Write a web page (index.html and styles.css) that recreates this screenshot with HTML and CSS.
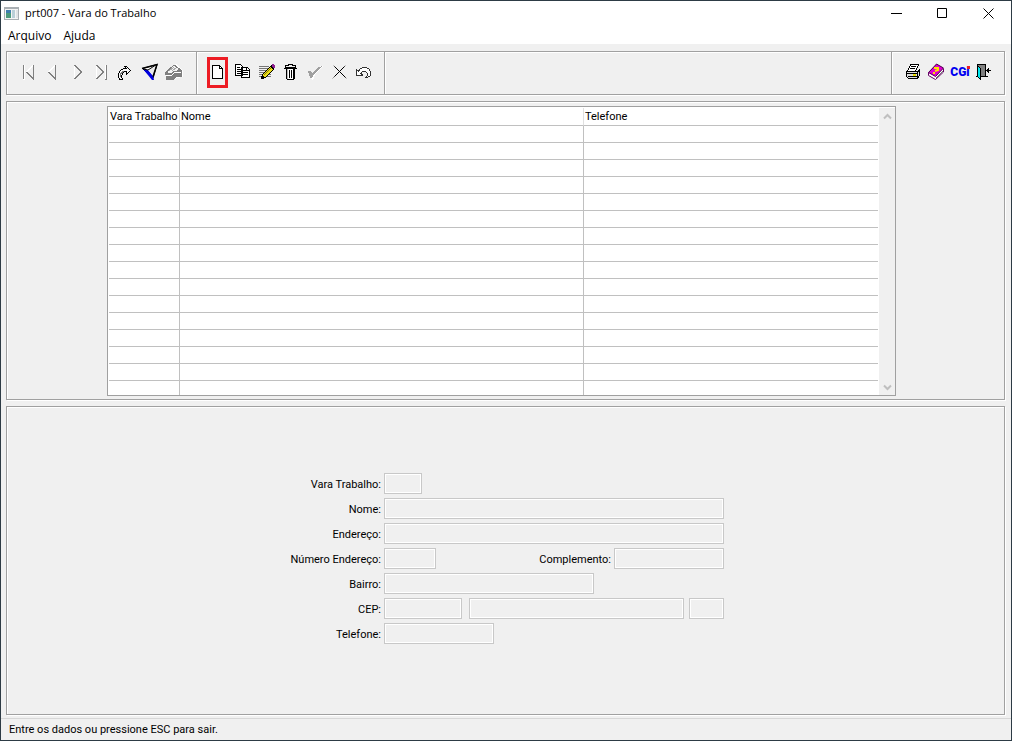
FILE: index.html
```html
<!DOCTYPE html>
<html lang="pt-BR">
<head>
<meta charset="utf-8">
<title>prt007 - Vara do Trabalho</title>
<link rel="stylesheet" href="styles.css">
</head>
<body>
<div class="window">
  <header class="titlebar">
    <svg class="app-icon" width="15" height="13" viewBox="0 0 15 13" shape-rendering="crispEdges" aria-hidden="true">
      <path fill="#a9afb3" d="M0 0h15v13H0z"/><path fill="#f4f4f4" d="M1 2h13v10H1z"/>
      <path fill="#3f7fae" d="M2 3h5v3H2z"/><path fill="#4c9a7c" d="M2 6h5v5H2z"/><path fill="#b9cfd8" d="M8 3h3v8H8z"/><path fill="#dfe3e6" d="M12 3h2v8h-2z"/>
    </svg>
    <h1 class="title">prt007 - Vara do Trabalho</h1>
    <div class="controls">
      <button class="control" type="button" aria-label="Minimizar"><svg width="11" height="11" viewBox="0 0 11 11"><path d="M0 5.500h11"/></svg></button>
      <button class="control" type="button" aria-label="Maximizar"><svg width="11" height="11" viewBox="0 0 11 11"><path d="M.5 .5h9v9h-9z"/></svg></button>
      <button class="control" type="button" aria-label="Fechar"><svg width="11" height="11" viewBox="0 0 11 11"><path d="M.5 .5l10 10M10.500 .5l-10 10"/></svg></button>
    </div>
  </header>
  <nav class="menubar">
    <button class="menu" type="button">Arquivo</button>
    <button class="menu" type="button">Ajuda</button>
  </nav>

  <main class="content">
    <div class="toolbar panel" role="toolbar">
      <div class="group group-nav">
        <button class="tool" type="button" aria-label="Primeiro"><svg viewBox="0 0 24 24"><path class="w" d="M8.500 5v15M6.500 19.500h2M10.500 12l7-7"/><path class="g" d="M7.500 5v14M17.500 5v14.500M10.500 12l7 7"/></svg></button>
        <button class="tool" type="button" aria-label="Anterior"><svg viewBox="0 0 24 24"><path class="w" d="M8.500 12l7-7"/><path class="g" d="M15.500 5v14.500M8.500 12l7 7"/></svg></button>
        <button class="tool" type="button" aria-label="Próximo"><svg viewBox="0 0 24 24"><path class="w" d="M10.500 5v14"/><path class="g" d="M10.500 5l7 7-7 7"/></svg></button>
        <button class="tool" type="button" aria-label="Último"><svg viewBox="0 0 24 24"><path class="w" d="M8.500 5v14M17.500 5v14"/><path class="g" d="M8.500 5l7 7-7 7M18.500 5v14.500h-2"/></svg></button>
        <button class="tool" type="button" aria-label="Ir para"><svg viewBox="0 0 24 24"><path fill="#f8f8f8" stroke="#000" d="M8.500 19.500h-1l-1-3v-3l2-3 3-2h3l-2-2h2l4 4-4 4v-3h-2l-2 2-1 3 1 3z"/><path fill="none" stroke="#777" d="M8.500 17v-3l3-3"/></svg></button>
        <button class="tool" type="button" aria-label="Filtrar"><svg class="smooth" viewBox="0 0 24 24"><path fill="#fff" stroke="#000" d="M6.500 8.500L21 4.500 17 18.500z"/><path fill="#0000e0" d="M7 9l5 1 5 6 1 4h-2z"/><path fill="#e8e8e8" d="M12 10l7-4-2 9z"/><path fill="none" stroke="#000" stroke-width="1.500" d="M6 8.500l15-4-4 12"/><path stroke="#000" fill="none" d="M7 9l5 1 7-4.500"/></svg></button>
        <button class="tool" type="button" aria-label="Consultar" disabled><svg viewBox="0 0 24 24"><path fill="#fff" d="M6 19v-7l6-6 4-2 7 6v7l-6 1-4 2z"/><path fill="#808080" d="M5 12l6-5 2-2h2l4 3 3 2v7h-5l-4 3H6v-4h5l4-3h6v-1h-6l-4 3H5z"/><path fill="#f4f4f4" d="M8 11l6-5 5 3-3 2h-3l-2 2H8z"/><path stroke="#aaa" d="M9 11l5-4M12 11l4-3"/></svg></button>
      </div>
      <div class="group group-edit">
        <button class="tool highlighted" type="button" aria-label="Novo"><svg viewBox="0 0 24 24"><path fill="#fff" stroke="#000" d="M7.500 5.500h7l3 3v10h-10z"/><path fill="none" stroke="#000" d="M14.500 5.500v3h3"/></svg></button>
        <button class="tool" type="button" aria-label="Copiar"><svg viewBox="0 0 24 24"><path fill="#fff" stroke="#000" d="M5.500 4.500h5l2 2v9h-7zM11.500 7.500h6l2 2v8h-8z"/><path fill="none" stroke="#000" d="M7 7.500h3M7 9.500h4M7 11.500h4M7 13.500h4M13 10.500h3M13 12.500h5M13 14.500h5M16.500 8v2h3"/></svg></button>
        <button class="tool" type="button" aria-label="Editar"><svg viewBox="0 0 24 24"><path stroke="#777" d="M5 6.500h10M5 8.500h9M5 10.500h7M5 12.500h5M5 14.500h4M5 16.500h3M12 16.500h5M14 14.500h3"/><path fill="#e8dc18" stroke="#000" d="M7.500 18.500l1-4 8-8 3 3-8 8z"/><path fill="none" stroke="#867a00" d="M10 15l7-7"/><path fill="#000" d="M7 16h2l1 1v1l-3 1zM17 5h3v4h-1l-3-3z"/><path fill="#902090" d="M18 4h2v1h1v3h-2l-1-2z"/></svg></button>
        <button class="tool" type="button" aria-label="Excluir"><svg viewBox="0 0 24 24"><path fill="#fff" stroke="#000" d="M8.500 8.500h8v10l-1 1h-6l-1-1z"/><path fill="#bbb" d="M9 9h1v10H9z"/><path fill="#000" d="M10 4h5v1h3v3h1v1H6V8h1V5h3zM11 10h1v8h-1zM13 10h1v8h-1zM15 9h1v10h-1z"/><path fill="#eee" d="M11 5h3v1h-3zM8 6h9v1H8z"/></svg></button>
        <button class="tool" type="button" aria-label="Confirmar" disabled><svg viewBox="0 0 24 24"><path fill="#fff" d="M7 13l2-2 2 3 7-8h3l-8 9-2 5h-1z"/><path fill="#a0a0a0" d="M6 11h3l1 2 7-6 3-1-8 8-2 4H8z"/></svg></button>
        <button class="tool" type="button" aria-label="Cancelar"><svg class="smooth" viewBox="0 0 24 24"><path fill="none" stroke="#999" d="M7.500 5.500l13 13M19.500 5.500l-13 13"/><path fill="none" stroke="#000" d="M8.500 6.500l11 11M18.500 6.500l-10 10"/></svg></button>
        <button class="tool" type="button" aria-label="Desfazer"><svg viewBox="0 0 24 24"><path fill="#fff" stroke="#333" d="M6.500 9.500v6h6v-1l-2-1 2-2h3l2 2v2l-2 2h2l3-2v-4l-2-3-3-1h-3l-3 2-1 2z"/></svg></button>
      </div>
      <div class="group group-empty"></div>
      <div class="group group-end">
        <button class="tool" type="button" aria-label="Imprimir"><svg viewBox="0 0 24 24"><path fill="#fff" stroke="#000" d="M10.500 4.500h8l-3 7h-8z"/><path stroke="#000" d="M11 6.500h5M10 8.500h5"/><path fill="#ddd" stroke="#000" d="M6.500 11.500h12l1-2v6l-2 3h-9l-2-2z"/><path stroke="#000" d="M6 13.500h11M8 16.500h9M17.500 12v6"/><path fill="#e6dc00" d="M13 14h3v2h-3z"/></svg></button>
        <button class="tool" type="button" aria-label="Ajuda"><svg class="smooth" viewBox="0 0 24 24"><path fill="#fff" stroke="#650065" d="M4.500 13L12.500 4.500 19.500 9v3l-8 7.500-7-4z"/><path fill="#e000d0" stroke="#500050" d="M4.500 12.500L12.500 4l7 4-8 8.500z"/><path stroke="#777" d="M12 18l7-7"/><path fill="none" stroke="#ffe500" stroke-width="2" d="M10 8h4v2l-3 1"/><path fill="#ffe500" d="M9 12h2v2H9z"/></svg></button>
        <button class="tool cgi" type="button">CGi</button>
        <button class="tool" type="button" aria-label="Sair"><svg viewBox="0 0 24 24"><path fill="#808080" stroke="#000" d="M5.500 4.500h8v12h-8z"/><path fill="#00e8f0" stroke="#000" d="M5.500 5.500l3 3v11l-3-3z"/><path stroke="#000" d="M4 16.500h2M9 16.500h7M15 10.500h4"/><path fill="#000" d="M14 10.500l3-3v6z"/></svg></button>
      </div>
    </div>

    <section class="panel list-panel">
      <div class="grid">
        <table class="records">
          <colgroup><col class="col-code"><col class="col-name"><col></colgroup>
          <thead><tr><th scope="col">Vara Trabalho</th><th scope="col">Nome</th><th scope="col">Telefone</th></tr></thead>
          <tbody>
            <tr><td></td><td></td><td></td></tr>
            <tr><td></td><td></td><td></td></tr>
            <tr><td></td><td></td><td></td></tr>
            <tr><td></td><td></td><td></td></tr>
            <tr><td></td><td></td><td></td></tr>
            <tr><td></td><td></td><td></td></tr>
            <tr><td></td><td></td><td></td></tr>
            <tr><td></td><td></td><td></td></tr>
            <tr><td></td><td></td><td></td></tr>
            <tr><td></td><td></td><td></td></tr>
            <tr><td></td><td></td><td></td></tr>
            <tr><td></td><td></td><td></td></tr>
            <tr><td></td><td></td><td></td></tr>
            <tr><td></td><td></td><td></td></tr>
            <tr><td></td><td></td><td></td></tr>
            <tr><td></td><td></td><td></td></tr>
          </tbody>
        </table>
        <div class="scrollbar">
          <button class="scroll" type="button" aria-label="Rolar para cima" disabled><svg width="9" height="7" viewBox="0 0 9 7"><path d="M1 5.500l3.500-3.500L8 5.500"/></svg></button>
          <button class="scroll" type="button" aria-label="Rolar para baixo" disabled><svg width="9" height="7" viewBox="0 0 9 7"><path d="M1 1.500L4.500 5 8 1.500"/></svg></button>
        </div>
      </div>
    </section>

    <section class="panel form-panel">
      <form class="form">
        <div class="row"><label class="label" for="vara">Vara Trabalho:</label><input class="field w-code" id="vara" readonly></div>
        <div class="row"><label class="label" for="nome">Nome:</label><input class="field w-fill" id="nome" readonly></div>
        <div class="row"><label class="label" for="endereco">Endereço:</label><input class="field w-fill" id="endereco" readonly></div>
        <div class="row"><label class="label" for="numero">Número Endereço:</label><input class="field w-number" id="numero" readonly><label class="label label-end" for="complemento">Complemento:</label><input class="field w-phone" id="complemento" readonly></div>
        <div class="row"><label class="label" for="bairro">Bairro:</label><input class="field w-district" id="bairro" readonly></div>
        <div class="row"><label class="label" for="cep">CEP:</label><input class="field w-zip" id="cep" readonly><input class="field w-city" aria-label="Cidade" readonly><input class="field w-state" aria-label="UF" readonly></div>
        <div class="row"><label class="label" for="telefone">Telefone:</label><input class="field w-phone" id="telefone" readonly></div>
      </form>
    </section>
  </main>

  <footer class="status">Entre os dados ou pressione ESC para sair.</footer>
</div>
</body>
</html>
```

FILE: styles.css
```css
* { box-sizing: border-box; }
body {
  margin: 0;
  font: 11px/13px Roboto, "Liberation Sans", Arial, sans-serif;
  color: #000;
}
button {
  padding: 0;
  border: 0;
  background: none;
  font: inherit;
  color: inherit;
}
.window {
  display: flex;
  flex-direction: column;
  min-height: 100vh;
  border: 1px solid #2d3b45;
  background: #f0f0f0;
}

/* Title and menu */
.titlebar {
  display: flex;
  align-items: center;
  height: 25px;
  padding-left: 3px;
  background: #fff;
}
.title {
  flex: 1;
  margin: 0 0 0 6px;
  padding-bottom: 2px;
  font: 11px/16px "Open Sans", "Noto Sans", sans-serif;
}
.controls { display: flex; }
.control {
  display: flex;
  align-items: center;
  justify-content: center;
  width: 46px;
  height: 25px;
}
.control svg { fill: none; stroke: #000; }
.menubar {
  display: flex;
  gap: 12px;
  height: 18px;
  padding-left: 7px;
  background: #fff;
}
.menu { font: 12px/20px "Open Sans", "Noto Sans", sans-serif; }

/* Etched panels */
.content {
  flex: 1;
  display: flex;
  flex-direction: column;
  gap: 6px;
  padding: 7px 6px 3px 5px;
}
.panel {
  border: 1px solid #a0a0a0;
  box-shadow: inset 1px 1px #fff, 1px 1px #fff;
}

/* Toolbar */
.toolbar { display: flex; height: 44px; }
.group {
  display: flex;
  align-items: center;
  padding-bottom: 2px;
  border-right: 1px solid #a0a0a0;
  box-shadow: inset 1px 1px #fff;
}
.group-nav { width: 190px; padding-left: 9px; }
.group-edit { width: 188px; padding-left: 9px; }
.group-empty { flex: 1; }
.group-end { width: 112px; padding-left: 8px; border-right: 0; }
.tool {
  display: flex;
  flex: none;
  align-items: center;
  justify-content: center;
  width: 24px;
  height: 24px;
}
.tool svg {
  flex: none;
  width: 24px;
  height: 24px;
  shape-rendering: crispEdges;
}
.tool .smooth { shape-rendering: auto; }
.tool .g { fill: none; stroke: #808080; }
.tool .w { fill: none; stroke: #fff; }
.highlighted {
  width: 21px;
  height: 31px;
  margin: 0 2px 0 1px;
  border: 3px solid #ed1c24;
}
.highlighted svg { margin: 0 1px 1px 0; }
.cgi {
  position: relative;
  font: 900 12px/14px Roboto, sans-serif;
  color: #0000f0;
}
.cgi::after {
  content: "";
  position: absolute;
  top: 6px;
  right: 2px;
  width: 3px;
  height: 3px;
  background: #ed1c24;
}

/* Record list */
.list-panel {
  display: flex;
  justify-content: center;
  padding: 4px 8px 3px 0;
}
.grid {
  display: flex;
  width: 789px;
  max-width: 100%;
  padding: 1px 0 0 1px;
  border: 1px solid #a0a0a0;
  background: #fff;
}
.records {
  flex: 1;
  margin-right: 1px;
  table-layout: fixed;
  border-collapse: separate;
  border-spacing: 0;
}
.col-code { width: 71px; }
.col-name { width: 404px; }
.records th, .records td {
  height: 17px;
  padding: 0;
  border-right: 1px solid #c0c0c0;
  border-bottom: 1px solid #c0c0c0;
}
.records th {
  height: 18px;
  padding: 0 0 0 1px;
  border-right-color: #e0e0e0;
  font-weight: normal;
  text-align: left;
  white-space: nowrap;
}
.records th:last-child, .records td:last-child { border-right: 0; }
.records tr:last-child td { height: 14px; border-bottom: 0; }
.scrollbar {
  display: flex;
  flex-direction: column;
  justify-content: space-between;
  width: 16px;
  background: #f0f0f0;
}
.scroll { height: 16px; }
.scroll svg {
  display: block;
  margin: 0 auto;
  fill: none;
  stroke: #bfbfbf;
  stroke-width: 2;
}

/* Form */
.form-panel {
  flex: 1;
  display: flex;
  align-items: center;
  justify-content: center;
  padding-bottom: 5px;
}
.form {
  display: grid;
  gap: 4px;
  width: 437px;
}
.row { display: flex; align-items: center; }
.label {
  width: 94px;
  margin-right: 3px;
  padding-top: 2px;
  text-align: right;
  white-space: nowrap;
}
.label-end { flex: 1; }
.field {
  height: 21px;
  padding: 0 3px;
  border: 1px solid #c8c8c8;
  outline: 0;
  background: #f0f0f0;
  box-shadow: inset 0 0 0 1px #fff;
  font: inherit;
}
.w-code { width: 38px; }
.w-fill { flex: 1; }
.w-number { width: 52px; }
.w-phone { width: 110px; }
.w-district { width: 210px; }
.w-zip { width: 78px; }
.w-city { flex: 1; min-width: 0; margin: 0 5px 0 7px; }
.w-state { width: 35px; }

.status {
  height: 22px;
  padding-left: 8px;
  border-top: 1px solid #d7d7d7;
  line-height: 22px;
}
```
